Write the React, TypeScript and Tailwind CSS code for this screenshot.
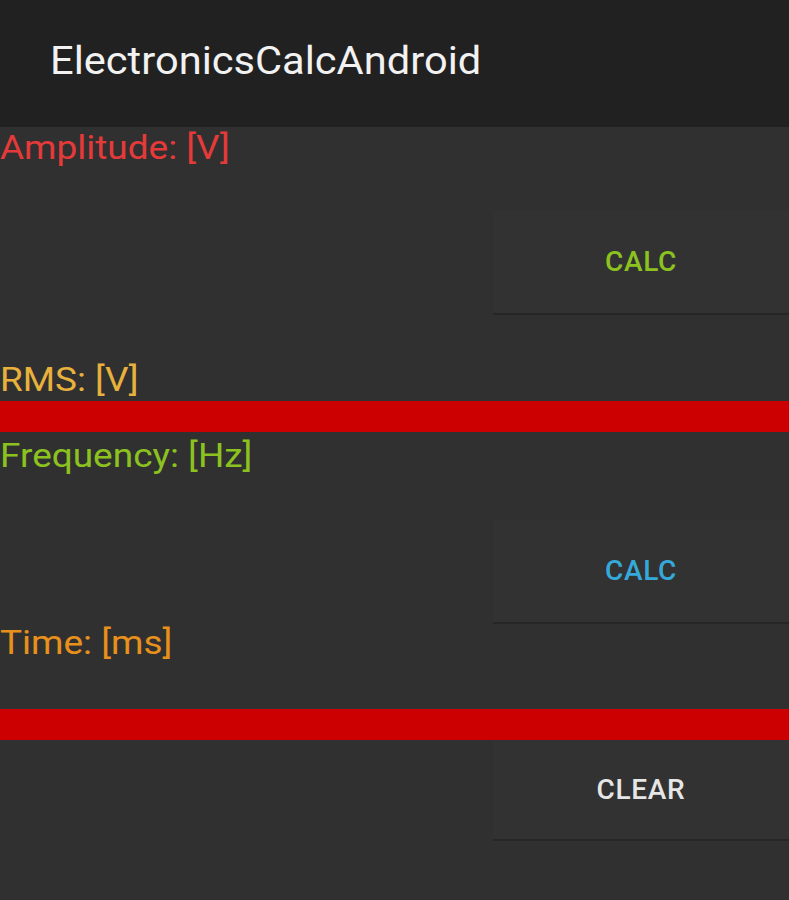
const Label = ({ text, color }: { text: string; color: string }) => (
  <div className={`h-[37px] text-[33px] leading-[37px] ${color}`}>
    <span className="inline-block origin-left scale-x-[1.12]">{text}</span>
  </div>
);

const CalcButton = ({ text, color, h = 'h-[106px]' }: { text: string; color: string; h?: string }) => (
  <div className="flex justify-end">
    <button
      className={`w-[296px] ${h} bg-[#323232] border-b-2 border-[#262626] text-[28px] font-medium tracking-wide ${color}`}
    >
      {text}
    </button>
  </div>
);

const Divider = () => <div className="h-[31px] bg-[#cc0000]" />;

export default function App() {
  return (
    <div
      className="w-[789px] h-[900px] bg-[#303030] overflow-hidden"
      style={{ fontFamily: 'Roboto, "Noto Sans", sans-serif' }}
    >
      <header className="h-[127px] bg-[#212121] flex items-center pl-[50px] pb-[4px]">
        <h1 className="text-[38px] text-[#f2f2f2] origin-left scale-x-[1.095]">ElectronicsCalcAndroid</h1>
      </header>

      {/* Amplitude -> RMS */}
      <div className="pt-[2px]">
        <Label text="Amplitude: [V]" color="text-[#e53a3a]" />
        <div className="h-[44px]" />
        <CalcButton text="CALC" color="text-[#8cc21f]" h="h-[105px]" />
        <div className="h-[46px]" />
        <Label text="RMS: [V]" color="text-[#e8b13c]" />
        <div className="h-[3px]" />
      </div>
      <Divider />

      {/* Frequency -> Time */}
      <div className="pt-[5px]">
        <Label text="Frequency: [Hz]" color="text-[#8cc21f]" />
        <div className="h-[46px]" />
        <CalcButton text="CALC" color="text-[#35a9d9]" h="h-[104px]" />
        <Label text="Time: [ms]" color="text-[#e8901c]" />
        <div className="h-[48px]" />
      </div>
      <Divider />

      <CalcButton text="CLEAR" color="text-[#e6e6e6]" h="h-[101px]" />
    </div>
  );
}
